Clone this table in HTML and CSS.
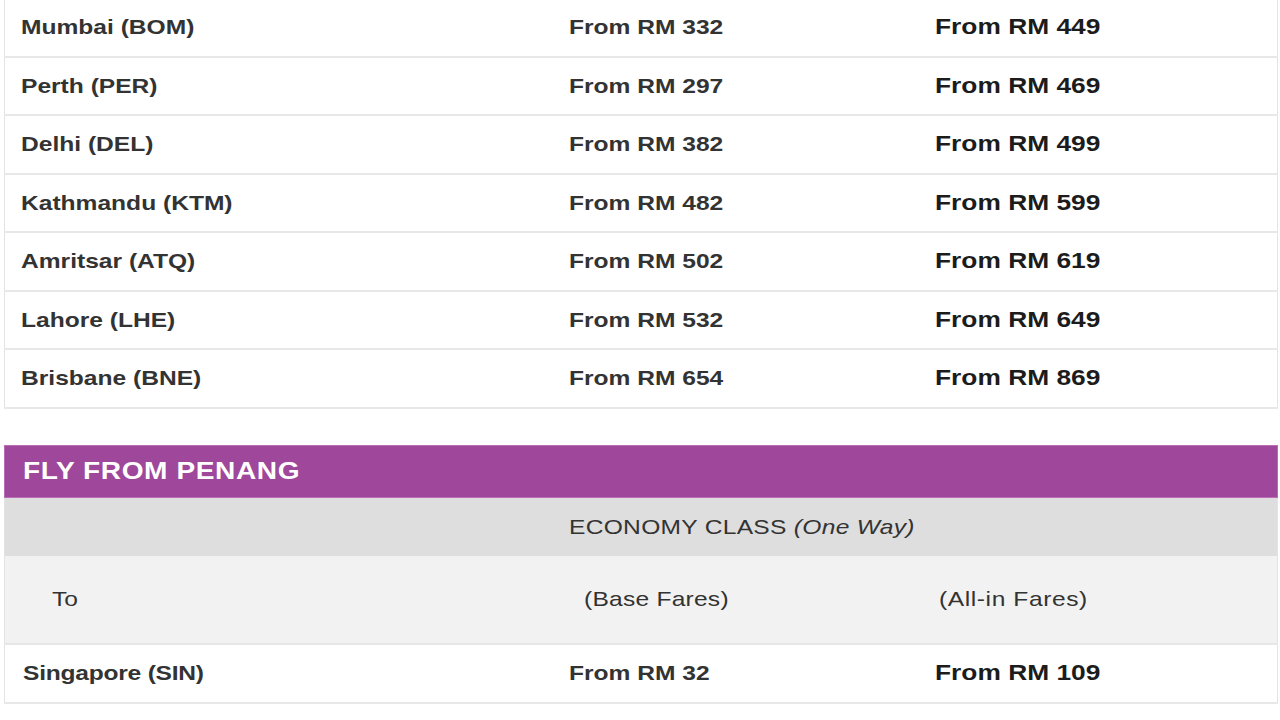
FILE: index.html
```html
<!DOCTYPE html>
<html lang="en">
<head>
<meta charset="utf-8">
<title>Fares</title>
<link rel="stylesheet" href="styles.css">
</head>
<body>
<div class="page">
  <table class="fares fares-top">
    <colgroup><col class="c1"><col class="c2"><col class="c3"></colgroup>
    <tbody>
      <tr><td class="city"><span class="t">Mumbai (BOM)</span></td><td class="base"><span class="t">From RM 332</span></td><td class="allin"><span class="t">From RM 449</span></td></tr>
      <tr><td class="city"><span class="t">Perth (PER)</span></td><td class="base"><span class="t">From RM 297</span></td><td class="allin"><span class="t">From RM 469</span></td></tr>
      <tr><td class="city"><span class="t">Delhi (DEL)</span></td><td class="base"><span class="t">From RM 382</span></td><td class="allin"><span class="t">From RM 499</span></td></tr>
      <tr><td class="city"><span class="t">Kathmandu (KTM)</span></td><td class="base"><span class="t">From RM 482</span></td><td class="allin"><span class="t">From RM 599</span></td></tr>
      <tr><td class="city"><span class="t">Amritsar (ATQ)</span></td><td class="base"><span class="t">From RM 502</span></td><td class="allin"><span class="t">From RM 619</span></td></tr>
      <tr><td class="city"><span class="t">Lahore (LHE)</span></td><td class="base"><span class="t">From RM 532</span></td><td class="allin"><span class="t">From RM 649</span></td></tr>
      <tr><td class="city"><span class="t">Brisbane (BNE)</span></td><td class="base"><span class="t">From RM 654</span></td><td class="allin"><span class="t">From RM 869</span></td></tr>
    </tbody>
  </table>

  <table class="fares fares-penang">
    <colgroup><col class="c1"><col class="c2"><col class="c3"></colgroup>
    <thead>
      <tr class="title-row"><th colspan="3" class="title"><span class="t">FLY FROM PENANG</span></th></tr>
      <tr class="class-row"><th></th><th colspan="2" class="class-name"><span class="t">ECONOMY CLASS <em>(One Way)</em></span></th></tr>
      <tr class="label-row"><th class="lbl-to"><span class="t">To</span></th><th class="lbl-base"><span class="t">(Base Fares)</span></th><th class="lbl-allin"><span class="t">(All-in Fares)</span></th></tr>
    </thead>
    <tbody>
      <tr><td class="city"><span class="t">Singapore (SIN)</span></td><td class="base"><span class="t">From RM 32</span></td><td class="allin"><span class="t">From RM 109</span></td></tr>
    </tbody>
  </table>
</div>
</body>
</html>
```

FILE: styles.css
```css
html, body {
  margin: 0;
  padding: 0;
  background: #ffffff;
}

body {
  font-family: "Liberation Sans", Arial, sans-serif;
  color: #333333;
  overflow: hidden;
}

.page {
  padding: 0 2px 0 4px;
}

/* the source text is rendered slightly wide */
.t {
  display: inline-block;
  transform: scaleX(1.17);
  transform-origin: left center;
}

.fares {
  width: 1274px;
  border-collapse: collapse;
  table-layout: fixed;
}

.c1 { width: 548px; }
.c2 { width: 366px; }
.c3 { width: auto; }

.fares-top {
  margin-top: -2px;
  border: 1px solid #e3e3e3;
}

.fares td {
  height: 56.5px;
  padding: 0 0 0 16px;
  border-bottom: 2px solid #e8e8e8;
  vertical-align: middle;
  white-space: nowrap;
}

.fares td.city,
.fares td.base {
  font-size: 21px;
  font-weight: 700;
  color: #333333;
}

.fares td.allin {
  font-size: 22.5px;
  font-weight: 700;
  color: #1c1c1c;
}

.fares-penang {
  margin-top: 36px;
  border: 1px solid #e3e3e3;
}

.fares th {
  text-align: left;
  white-space: nowrap;
  padding: 0;
  font-weight: 400;
}

.title-row th {
  background: #9e479b;
  color: #ffffff;
  height: 51px;
  padding-left: 18px;
  font-size: 24px;
  font-weight: 700;
  letter-spacing: 0.5px;
  border: 1px solid #b86db5;
}

.class-row th {
  background: #dedede;
  height: 58px;
}

.class-name {
  padding-left: 16px !important;
  font-size: 21px;
  letter-spacing: 0.25px;
  color: #333333;
}

.class-name em {
  font-style: italic;
}

.label-row th {
  background: #f2f2f2;
  height: 87px;
  font-size: 21px;
  color: #333333;
  border-bottom: 2px solid #e6e6e6;
}

.lbl-to {
  padding-left: 47px !important;
}

.lbl-base {
  padding-left: 31px !important;
  letter-spacing: 0.2px;
}

.lbl-allin {
  padding-left: 20px !important;
  letter-spacing: 0.5px;
}

.fares-penang td {
  height: 57px;
}

.fares-penang td.city {
  padding-left: 18px;
  letter-spacing: -0.2px;
}
```
